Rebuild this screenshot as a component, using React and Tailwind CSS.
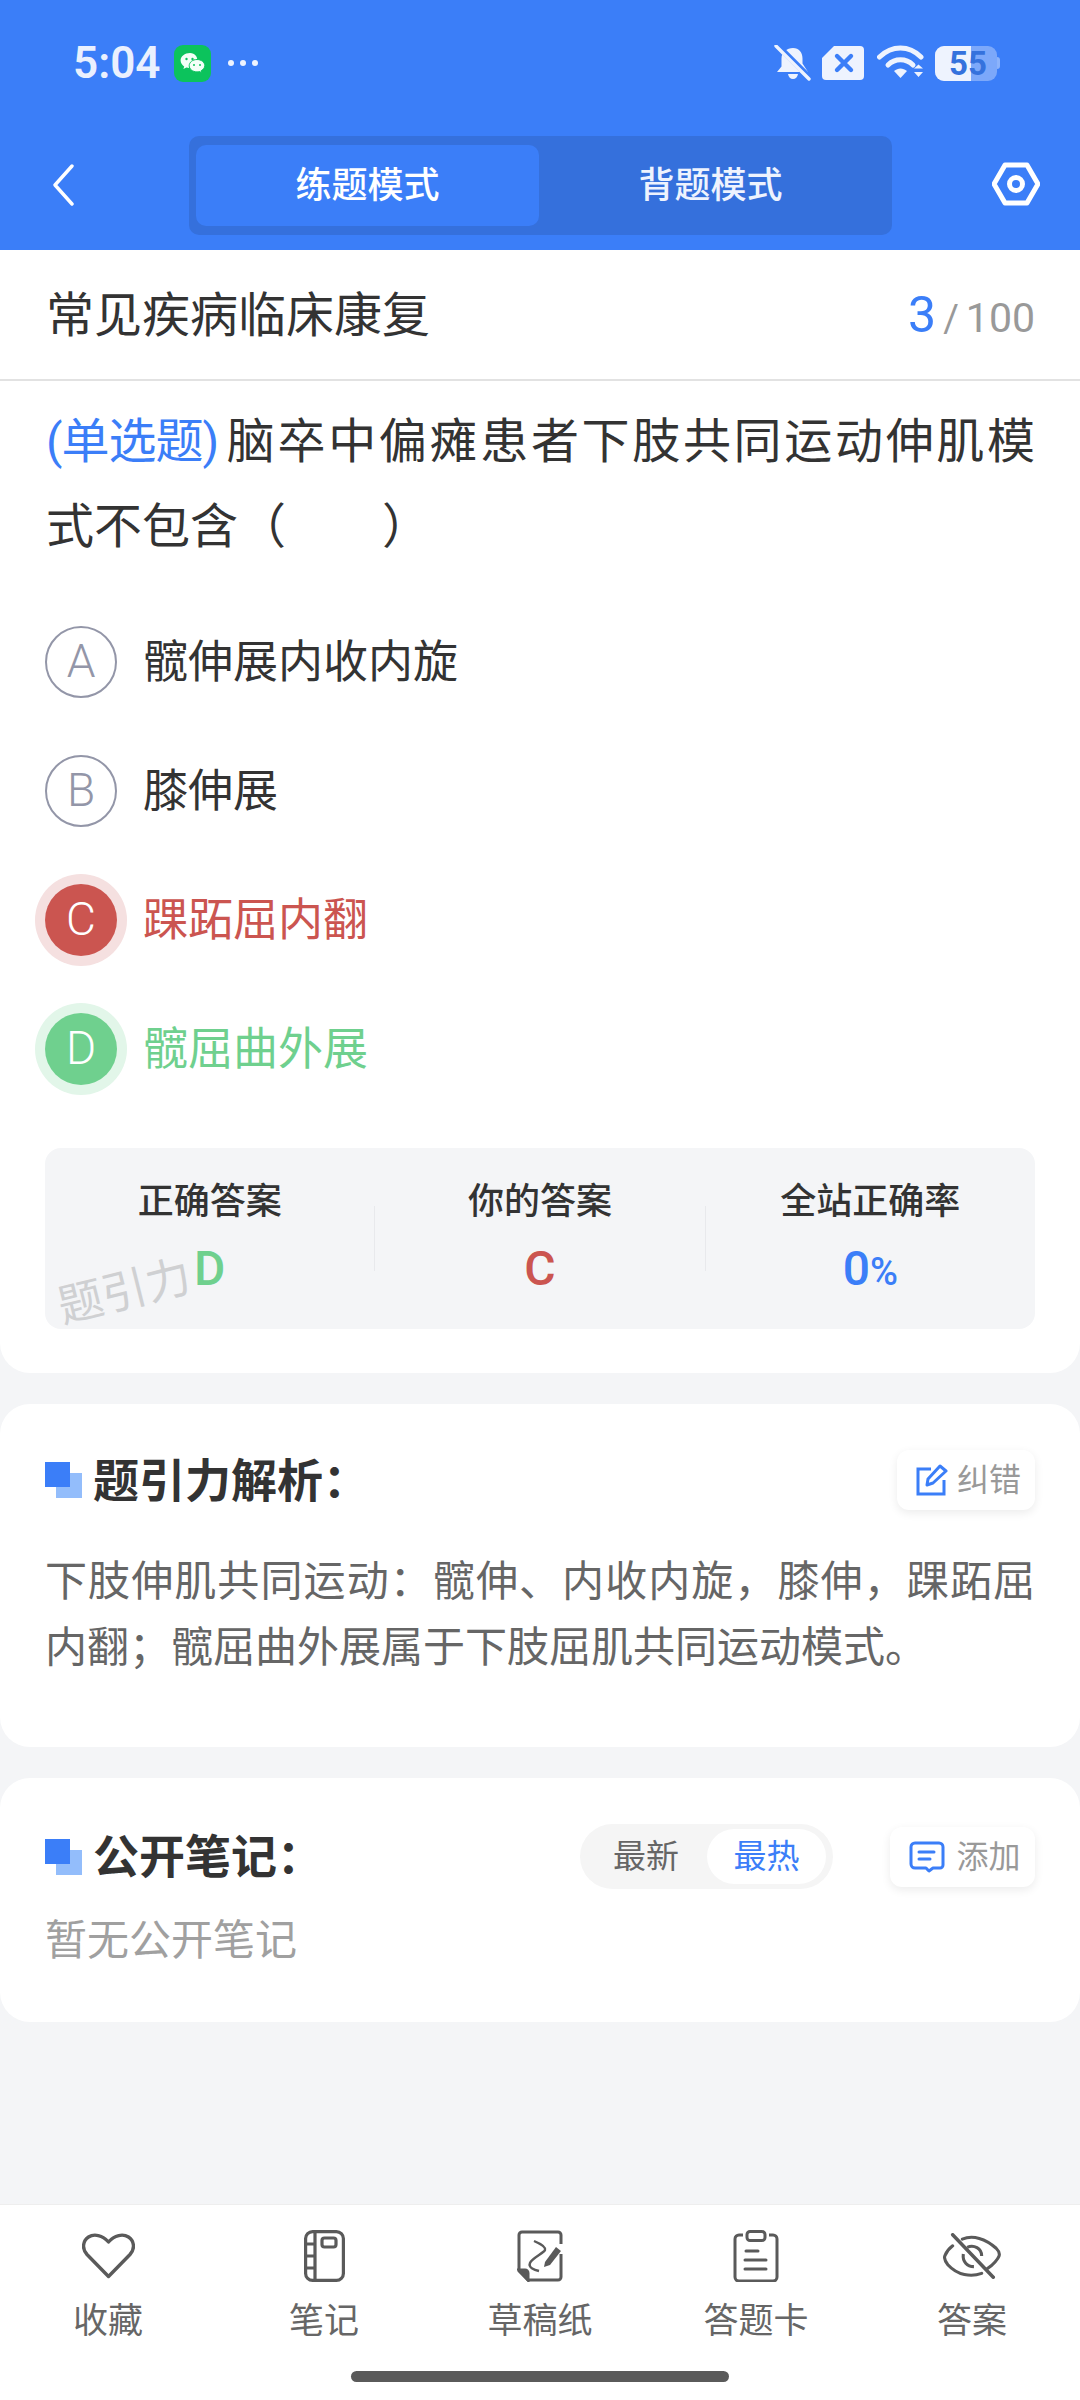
import React from 'react';

function WeChatIcon() {
  return (
    <svg width="37" height="37" viewBox="0 0 37 37">
      <rect width="37" height="37" rx="9" fill="#0cc35c" />
      <path d="M16 8c-5.200 0-9.400 3.300-9.400 7.500 0 2.400 1.400 4.500 3.600 5.900l-.8 2.600 3-1.600c.9.3 1.900.5 3 .5 5 0 8-3.300 8-7.200S21.200 8 16 8z" fill="#f4fff8" />
      <circle cx="12.500" cy="14" r="1.200" fill="#0cc35c" />
      <circle cx="18.500" cy="14" r="1.200" fill="#0cc35c" />
      <path d="M23 14.500c-4.300 0-7.800 2.800-7.800 6.200s3.500 6.200 7.800 6.200c.9 0 1.700-.1 2.500-.4l2.300 1.300-.6-2.100c1.800-1.100 3.600-2.900 3.600-5 0-3.400-3.500-6.200-7.800-6.200z" fill="#f4fff8" stroke="#0cc35c" strokeWidth="1" />
      <circle cx="20" cy="20" r="1" fill="#0cc35c" />
      <circle cx="26" cy="20" r="1" fill="#0cc35c" />
    </svg>
  );
}

function StatusIcons() {
  return (
    <div className="flex items-center">
      <svg width="38" height="36" viewBox="0 0 38 36">
        <path d="M19 3c6 0 9.500 4.500 9.500 10.500v5L34 27H3l4.500-5.500v-8C7.500 7.500 13 3 19 3z" fill="#eef3fe" />
        <path d="M14 29h10c-.5 3-2.500 5-5 5s-4.500-2-5-5z" fill="#eef3fe" />
        <path d="M3 0l33 33" stroke="#3b7ef8" strokeWidth="6" />
        <path d="M2 1l33 33" stroke="#eef3fe" strokeWidth="3.400" strokeLinecap="round" />
      </svg>
      <svg className="ml-[9px]" width="44" height="36" viewBox="0 0 44 36">
        <path d="M13 1h26a4 4 0 0 1 4 4v26a4 4 0 0 1-4 4H5a4 4 0 0 1-4-4V13z" fill="#eef3fe" />
        <path d="M16 11l14 14M30 11L16 25" stroke="#3b7ef8" strokeWidth="4.400" strokeLinecap="round" />
      </svg>
      <svg className="ml-[12px]" width="48" height="36" viewBox="0 0 48 36">
        <path d="M2.500 12C15 0 32 0 44 12" fill="none" stroke="#eef3fe" strokeWidth="5" strokeLinecap="round" />
        <path d="M11 20c7-7 18-7 25 0" fill="none" stroke="#eef3fe" strokeWidth="5" strokeLinecap="round" />
        <path d="M17 26c4-3.500 9-3.500 13 0l-6.500 7z" fill="#eef3fe" />
        <path d="M37 23.500l4.500-4 4.500 4zM37 27h9l-4.500 5z" fill="#eef3fe" />
      </svg>
      <div className="relative ml-[10px] h-[35px] w-[65px]">
        <div className="absolute right-0 top-[11px] h-[12px] w-[3px] rounded-r-sm bg-[#8cb3fb]" />
        <div className="absolute left-0 top-0 h-[35px] w-[62px] rounded-[9px] bg-[#7ca8fa]" />
        <div className="absolute left-0 top-0 h-[35px] w-[36px] rounded-l-[9px] bg-[#eef3fe]" />
        <div className="absolute left-[14px] top-0 font-['Roboto',sans-serif] text-[33px] font-bold leading-[35px] text-[#3572dd]">55</div>
      </div>
    </div>
  );
}

function BulletSquares() {
  return (
    <div className="relative h-[36px] w-[37px] shrink-0">
      <div className="absolute bottom-0 right-0 h-[25px] w-[26px] bg-[#93bdfb]" />
      <div className="absolute left-0 top-0 h-[25px] w-[25px] bg-[#3b7ef8]" />
    </div>
  );
}

function HeartIcon() {
  return (
    <svg width="53" height="46" viewBox="0 0 53 46" fill="none" stroke="#5a5a5a" strokeWidth="3.400" strokeLinejoin="round">
      <path d="M26.500 43.500L5 21.500C-.5 15.500 1 7.500 6.500 4c5.500-3.500 14-2 20 5 6-7 14.500-8.500 20-5 5.500 3.500 7 11.500 1.500 17.500z" />
    </svg>
  );
}

function NotebookIcon() {
  return (
    <svg width="41" height="52" viewBox="0 0 41 52" fill="none" stroke="#5a5a5a" strokeWidth="3.200">
      <rect x="1.600" y="1.600" width="37.800" height="48.800" rx="7" />
      <path d="M11 2v48M2 14h9M2 26h9M2 38h9" />
      <rect x="18" y="8" width="14" height="9" rx="2.500" />
    </svg>
  );
}

function DraftIcon() {
  return (
    <svg width="46" height="52" viewBox="0 0 46 52" fill="none" stroke="#5a5a5a" strokeWidth="3">
      <path d="M44 14V5a3 3 0 0 0-3-3H5a3 3 0 0 0-3 3v36l9 9h30a3 3 0 0 0 3-3V24" />
      <path d="M2 40h6a3 3 0 0 1 3 3v7z" fill="#5a5a5a" />
      <path d="M17 11c5 2 12 6 11 9s-13 8-15 13 5 7 9 8" strokeWidth="2.400" />
      <path d="M28 32l11-15 5 4-11 14-6 2z" fill="#5a5a5a" stroke="none" />
    </svg>
  );
}

function ClipboardIcon() {
  return (
    <svg width="46" height="52" viewBox="0 0 46 52" fill="none" stroke="#5a5a5a" strokeWidth="3">
      <path d="M10 5H6a4 4 0 0 0-4 4v38a4 4 0 0 0 4 4h34a4 4 0 0 0 4-4V9a4 4 0 0 0-4-4h-4" />
      <rect x="14" y="1.500" width="18" height="9" rx="3" />
      <path d="M13 21h12M12 30h21M12 39h21" strokeLinecap="round" />
    </svg>
  );
}

function EyeOffIcon() {
  return (
    <svg width="58" height="46" viewBox="0 0 60 46" fill="none" stroke="#5a5a5a" strokeWidth="3.200">
      <path d="M20 5.500C31 1 44 5 55 15c2.500 2.500 4 5 3 8-1 3-6 9-12 13M40 41c-11 4-25 2-35-9-2-2.500-4.500-6-3-9.500 1.500-3.500 4-7 8-10" strokeLinecap="round" />
      <path d="M25 14c7-3 15 1 15 9M21 21c-1 8 4 13 11 13" />
      <path d="M10 1l42 44" strokeWidth="3.600" strokeLinecap="round" />
    </svg>
  );
}

const options = [
  { letter: 'A', text: '髋伸展内收内旋' },
  { letter: 'B', text: '膝伸展' },
  { letter: 'C', text: '踝跖屈内翻', badge: 'bg-[#cb5550] ring-[#f5e0e0]', color: 'text-[#cb5550]' },
  { letter: 'D', text: '髋屈曲外展', badge: 'bg-[#6fd08e] ring-[#e2f6e9]', color: 'text-[#6fd08e]' },
];

const tools = [
  { label: '收藏', Icon: HeartIcon },
  { label: '笔记', Icon: NotebookIcon },
  { label: '草稿纸', Icon: DraftIcon },
  { label: '答题卡', Icon: ClipboardIcon },
  { label: '答案', Icon: EyeOffIcon },
];

export default function App() {
  return (
    <div className="flex h-[2400px] w-[1080px] flex-col overflow-hidden bg-[#f4f5f7] font-['Roboto','Noto_Sans_CJK_SC',sans-serif]">
      {/* Header */}
      <div className="h-[250px] shrink-0 bg-[#3b7ef8]">
        <div className="flex h-[126px] items-center pl-[73px] pr-[80px]">
          <span className="w-[101px] text-[44px] font-semibold text-[#eaf0fe]">5:04</span>
          <WeChatIcon />
          <div className="ml-[17px] flex gap-[6px]">
            <span className="h-[6px] w-[6px] rounded-full bg-[#eef3fe]" />
            <span className="h-[6px] w-[6px] rounded-full bg-[#eef3fe]" />
            <span className="h-[6px] w-[6px] rounded-full bg-[#eef3fe]" />
          </div>
          <div className="ml-auto"><StatusIcons /></div>
        </div>
        <div className="flex items-start pl-[52px] pr-[40px] pt-[10px]">
          <svg className="mt-[28px]" width="22" height="42" viewBox="0 0 22 42" fill="none" stroke="#fff" strokeWidth="3.400" strokeLinecap="round" strokeLinejoin="round">
            <path d="M20 2L3 21l17 19" />
          </svg>
          <div className="ml-[115px] flex h-[99px] w-[703px] rounded-[10px] bg-[#3570dc] px-[7px] py-[9px]">
            <div className="flex flex-1 items-center justify-center rounded-[10px] bg-[#3b7ef8] text-[36px] font-medium text-white">练题模式</div>
            <div className="flex flex-1 items-center justify-center pr-[3px] text-[36px] font-medium text-[#eef3fe]">背题模式</div>
          </div>
          <svg className="ml-auto mt-[26px]" width="48" height="44" viewBox="0 0 48 44" fill="none" stroke="#fff" strokeWidth="5" strokeLinejoin="round">
            <path d="M13 3h22l11 19-11 19H13L2 22z" />
            <circle cx="24" cy="22" r="6.500" />
          </svg>
        </div>
      </div>

      {/* Question card */}
      <div className="shrink-0 rounded-b-[30px] bg-white pb-[44px]">
        <div className="flex h-[131px] items-center justify-between border-b-2 border-[#e2e2e2] pl-[46px] pr-[45px] pt-[2px]">
          <span className="text-[48px] text-[#333]">常见疾病临床康复</span>
          <span className="flex items-baseline text-[41px] text-[#999]">
            <span className="text-[50px] text-[#3b7ef8]">3</span>
            <span className="mx-[7px] text-[38px]">/</span>
            100
          </span>
        </div>
        <p className="pl-[46px] pr-[45px] pt-[18px] text-justify text-[48px] leading-[85px] text-[#333]">
          <span className="mr-[6px] inline-block tracking-[-1px] text-[#3b7ef8]">(单选题)</span>脑卒中偏瘫患者下肢共同运动伸肌模式不包含（　　）
        </p>
        <div className="mt-[28px] flex flex-col pl-[45px]">
          {options.map((o) => (
            <div key={o.letter} className="flex h-[129px] items-center">
              {o.badge ? (
                <span className={`flex h-[72px] w-[72px] items-center justify-center rounded-full text-[46px] font-light text-white ring-[10px] ${o.badge}`}>{o.letter}</span>
              ) : (
                <span className="flex h-[72px] w-[72px] items-center justify-center rounded-full border-2 border-[#9396a8] text-[46px] font-light text-[#9396a8]">{o.letter}</span>
              )}
              <span className={`ml-[26px] pt-[2px] text-[45px] ${o.color || 'text-[#333]'}`}>{o.text}</span>
            </div>
          ))}
        </div>
        <div className="relative mx-[45px] mt-[35px] flex h-[181px] items-center rounded-[16px] bg-[#f4f5f7]">
          <div className="flex h-full flex-1 flex-col items-center pt-[32px]">
            <span className="text-[36px] font-medium leading-[44px] text-[#333]">正确答案</span>
            <span className="mt-[20px] text-[48px] font-medium leading-[50px] text-[#6fd08e]">D</span>
          </div>
          <div className="h-[65px] w-px bg-[#e8e9ec]" />
          <div className="flex h-full flex-1 flex-col items-center pt-[32px]">
            <span className="text-[36px] font-medium leading-[44px] text-[#333]">你的答案</span>
            <span className="mt-[20px] text-[48px] font-medium leading-[50px] text-[#cb5550]">C</span>
          </div>
          <div className="h-[65px] w-px bg-[#e8e9ec]" />
          <div className="flex h-full flex-1 flex-col items-center pt-[32px]">
            <span className="text-[36px] font-medium leading-[44px] text-[#333]">全站正确率</span>
            <span className="mt-[20px] text-[48px] font-medium leading-[50px] text-[#3b7ef8]">0<span className="text-[38px]">%</span></span>
          </div>
          <span className="absolute left-[12px] top-[119px] -rotate-[14deg] text-[45px] leading-[50px] text-[#cfd0d2]">题引力</span>
        </div>
      </div>

      {/* Analysis card */}
      <div className="mt-[31px] h-[343px] shrink-0 rounded-[30px] bg-white px-[45px] pt-[46px]">
        <div className="flex h-[60px] items-center">
          <BulletSquares />
          <span className="ml-[11px] pt-[2px] text-[46px] font-semibold text-[#333]">题引力解析：</span>
          <div className="ml-auto flex h-[60px] w-[138px] items-center justify-center gap-[9px] rounded-[12px] bg-white pl-[5px] shadow-[0_3px_10px_rgba(0,0,0,0.08)]">
            <svg width="32" height="32" viewBox="0 0 32 32" fill="none" stroke="#3b7ef8" strokeWidth="3">
              <path d="M15 5H2v25h26V16" />
              <path d="M11 21l1-6L24 2l6 5-13 12z" strokeLinejoin="round" />
            </svg>
            <span className="text-[32px] text-[#999]">纠错</span>
          </div>
        </div>
        <p className="mt-[39px] text-justify text-[42px] leading-[66px] text-[#666]">下肢伸肌共同运动：髋伸、内收内旋，膝伸，踝跖屈内翻；髋屈曲外展属于下肢屈肌共同运动模式。</p>
      </div>

      {/* Notes card */}
      <div className="mt-[31px] h-[244px] shrink-0 rounded-[30px] bg-white px-[45px] pt-[46px]">
        <div className="flex h-[65px] items-center">
          <BulletSquares />
          <span className="ml-[11px] pt-[2px] text-[46px] font-semibold text-[#333]">公开笔记：</span>
          <div className="ml-auto flex h-[65px] w-[253px] items-center justify-between rounded-full bg-[#f5f5f5] pl-[33px] pr-[7px]">
            <span className="text-[33px] text-[#666]">最新</span>
            <span className="flex h-[55px] w-[119px] items-center justify-center rounded-full bg-white text-[33px] text-[#3b7ef8]">最热</span>
          </div>
          <div className="ml-[57px] flex h-[60px] w-[145px] items-center justify-center gap-[11px] rounded-[12px] bg-white pl-[5px] shadow-[0_3px_10px_rgba(0,0,0,0.08)]">
            <svg width="36" height="32" viewBox="0 0 36 32" fill="none" stroke="#3b7ef8" strokeWidth="3">
              <path d="M6 2h24a4 4 0 0 1 4 4v18a3 3 0 0 1-3 3h-7l-4 3-3-3H6a4 4 0 0 1-4-4V6a4 4 0 0 1 4-4z" strokeLinejoin="round" />
              <path d="M10 11h15M10 18h11" strokeLinecap="round" />
            </svg>
            <span className="text-[32px] text-[#999]">添加</span>
          </div>
        </div>
        <p className="mt-[22px] text-[42px] leading-[60px] text-[#a0a0a0]">暂无公开笔记</p>
      </div>

      {/* Bottom bar */}
      <div className="mt-auto flex h-[196px] shrink-0 flex-col items-center border-t border-[#eeeeee] bg-white pt-[25px]">
        <div className="grid w-full grid-cols-5">
          {tools.map(({ label, Icon }) => (
            <div key={label} className="flex flex-col items-center">
              <div className="flex h-[52px] items-center"><Icon /></div>
              <span className="mt-[20px] text-[35px] leading-[40px] text-[#666]">{label}</span>
            </div>
          ))}
        </div>
        <div className="mt-[29px] h-[11px] w-[378px] rounded-full bg-[#5a5a5a]" />
      </div>
    </div>
  );
}
